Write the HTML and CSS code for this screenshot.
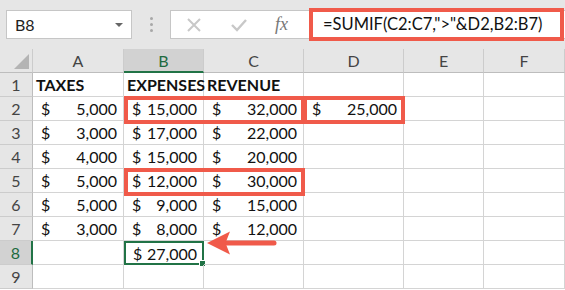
FILE: index.html
```html
<!DOCTYPE html>
<html lang="en">
<head>
	<meta charset="UTF-8">
	<title>SUMIF</title>
	<link rel="stylesheet" href="styles.css">
</head>
<body>
	<div class="app">
		<div class="toolbar">
			<div class="namebox">
				<span>B8</span>
				<span class="caret"></span>
			</div>
			<div class="grip"><i></i><i></i><i></i></div>
			<div class="fbar">
				<svg class="ico" width="16" height="16" viewBox="0 0 16 16"><path d="M2 2L14 14M14 2L2 14" stroke="#c8c8c8" stroke-width="2" fill="none"/></svg>
				<svg class="ico" width="16" height="16" viewBox="0 0 16 16"><path d="M1 8L6 13L15 3" stroke="#c8c8c8" stroke-width="2.4" fill="none"/></svg>
				<span class="fx">fx</span>
				<div class="formula">=SUMIF(C2:C7,"&gt;"&amp;D2,B2:B7)</div>
			</div>
		</div>

		<div class="sheet">
			<div class="hd corner"><span class="tri"></span></div>
			<div class="hd">A</div>
			<div class="hd sel-col">B</div>
			<div class="hd">C</div>
			<div class="hd">D</div>
			<div class="hd">E</div>
			<div class="hd">F</div>

			<div class="rn">1</div>
			<div class="c b">TAXES</div>
			<div class="c b">EXPENSES</div>
			<div class="c b">REVENUE</div>
			<div class="c"></div><div class="c"></div><div class="c"></div>

			<div class="rn">2</div>
			<div class="c acc"><span>$</span><span>5,000</span></div>
			<div class="c acc"><span>$</span><span>15,000</span></div>
			<div class="c acc"><span>$</span><span>32,000</span></div>
			<div class="c acc"><span>$</span><span>25,000</span></div>
			<div class="c"></div><div class="c"></div>

			<div class="rn">3</div>
			<div class="c acc"><span>$</span><span>3,000</span></div>
			<div class="c acc"><span>$</span><span>17,000</span></div>
			<div class="c acc"><span>$</span><span>22,000</span></div>
			<div class="c"></div><div class="c"></div><div class="c"></div>

			<div class="rn">4</div>
			<div class="c acc"><span>$</span><span>4,000</span></div>
			<div class="c acc"><span>$</span><span>15,000</span></div>
			<div class="c acc"><span>$</span><span>20,000</span></div>
			<div class="c"></div><div class="c"></div><div class="c"></div>

			<div class="rn">5</div>
			<div class="c acc"><span>$</span><span>5,000</span></div>
			<div class="c acc"><span>$</span><span>12,000</span></div>
			<div class="c acc"><span>$</span><span>30,000</span></div>
			<div class="c"></div><div class="c"></div><div class="c"></div>

			<div class="rn">6</div>
			<div class="c acc"><span>$</span><span>5,000</span></div>
			<div class="c acc"><span>$</span><span>9,000</span></div>
			<div class="c acc"><span>$</span><span>15,000</span></div>
			<div class="c"></div><div class="c"></div><div class="c"></div>

			<div class="rn">7</div>
			<div class="c acc"><span>$</span><span>3,000</span></div>
			<div class="c acc"><span>$</span><span>8,000</span></div>
			<div class="c acc"><span>$</span><span>12,000</span></div>
			<div class="c"></div><div class="c"></div><div class="c"></div>

			<div class="rn sel-row">8</div>
			<div class="c"></div>
			<div class="c acc active"><span>$</span><span>27,000</span><i class="handle"></i></div>
			<div class="c"></div><div class="c"></div><div class="c"></div><div class="c"></div>

			<div class="rn">9</div>
			<div class="c"></div><div class="c"></div><div class="c"></div><div class="c"></div><div class="c"></div><div class="c"></div>

			<!-- highlight boxes -->
			<div class="mark m-r2"></div>
			<div class="mark m-d2"></div>
			<div class="mark m-r5"></div>
			<svg class="arrow" width="72" height="26" viewBox="0 0 72 26">
				<path d="M20 13H68" stroke="#f05a4a" stroke-width="5" stroke-linecap="round"/>
				<path d="M1 13L24 1.5L19.5 13L24 24.5Z" fill="#f05a4a"/>
			</svg>
		</div>
	</div>
</body>
</html>
```

FILE: styles.css
```css
body{
	margin: 0;
	font-family: Lato, "Open Sans", sans-serif;
	color: #111;
}
.app{
	width: 565px;
	height: 290px;
	overflow: hidden;
	background: #fff;
}
.toolbar{
	height: 49px;
	background: #e6e6e6;
	display: flex;
	align-items: center;
	padding-left: 6px;
}
.namebox{
	background: #fff;
	border: 1px solid #c6c6c6;
	display: flex;
	align-items: center;
	justify-content: space-between;
	padding: 0 8px 0 8px;
	box-sizing: border-box;
	width: 126px;
	height: 29px;
	font-size: 16px;
	color: #222;
}
.caret{
	width: 0;
	height: 0;
	border-left: 4px solid transparent;
	border-right: 4px solid transparent;
	border-top: 4px solid #666;
}
.grip{
	width: 38px;
	display: flex;
	flex-direction: column;
	align-items: center;
	gap: 3px;
}
.grip i{
	width: 3px;
	height: 3px;
	background: #a8a8a8;
	border-radius: 50%;
}
.fbar{
	flex: 1;
	height: 29px;
	background: #fff;
	border: 1px solid #c6c6c6;
	border-right: none;
	display: flex;
	align-items: center;
	position: relative;
	box-sizing: border-box;
}
.ico{
	margin-left: 15px;
	margin-right: 14px;
}
.fx{
	font-family: "Liberation Serif", serif;
	font-style: italic;
	font-size: 18px;
	color: #777;
	margin-left: 14px;
}
.formula{
	position: absolute;
	left: 138px;
	top: -3px;
	width: 237px;
	height: 25px;
	border: 4px solid #f05a4a;
	background: #fff;
	font-size: 16.5px;
	line-height: 25px;
	padding-left: 10px;
	box-sizing: content-box;
	color: #111;
}
.sheet{
	position: relative;
	display: grid;
	grid-template-columns: 33px 91px 80px 100px 100px 80px 1fr;
	grid-template-rows: 24px repeat(9, 24px);
	font-size: 16px;
}
.hd{
	background: #e6e6e6;
	border-right: 1px solid #ccc;
	border-bottom: 1px solid #bdbdbd;
	display: flex;
	align-items: center;
	justify-content: center;
	color: #444;
	font-size: 16px;
	box-sizing: border-box;
}
.hd.corner{
	justify-content: flex-end;
	align-items: flex-end;
	padding: 0 3px 3px 0;
}
.tri{
	width: 0;
	height: 0;
	border-left: 15px solid transparent;
	border-bottom: 15px solid #b4b4b4;
}
.hd.sel-col{
	background: #d2d2d2;
	border-bottom: 2px solid #217346;
	color: #1e6b41;
}
.rn{
	background: #e6e6e6;
	border-right: 1px solid #bdbdbd;
	border-bottom: 1px solid #ccc;
	display: flex;
	align-items: center;
	justify-content: center;
	color: #444;
	box-sizing: border-box;
}
.rn.sel-row{
	background: #d2d2d2;
	border-right: 2px solid #217346;
	color: #1e6b41;
}
.c{
	border-right: 1px solid #d4d4d4;
	border-bottom: 1px solid #d4d4d4;
	display: flex;
	align-items: center;
	padding: 0 3px;
	box-sizing: border-box;
	white-space: nowrap;
	position: relative;
}
.c.b{
	font-weight: bold;
}
.c.acc{
	justify-content: space-between;
	padding: 0 6px 0 8px;
}
.c.active{
	border: 2px solid #217346;
	padding: 0 5px 0 7px;
}
.handle{
	position: absolute;
	right: -4px;
	bottom: -4px;
	width: 5px;
	height: 5px;
	background: #217346;
	border: 1px solid #fff;
}
.mark{
	position: absolute;
	border: 4px solid #f05a4a;
	box-sizing: border-box;
	pointer-events: none;
}
.m-r2{
	left: 124px;
	top: 47px;
	width: 181px;
	height: 28px;
}
.m-d2{
	left: 303px;
	top: 47px;
	width: 102px;
	height: 28px;
}
.m-r5{
	left: 124px;
	top: 119px;
	width: 181px;
	height: 28px;
}
.arrow{
	position: absolute;
	left: 206px;
	top: 181px;
}
```
